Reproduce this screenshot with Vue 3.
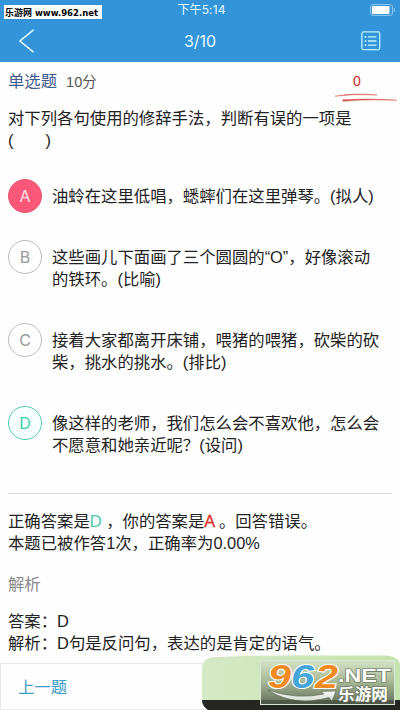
<script setup>
const options = [
  { key: 'A', state: 'wrong', lines: ['油蛉在这里低唱，蟋蟀们在这里弹琴。(拟人)'] },
  { key: 'B', state: '', lines: ['这些画儿下面画了三个圆圆的“O”，好像滚动', '的铁环。(比喻)'] },
  { key: 'C', state: '', lines: ['接着大家都离开床铺，喂猪的喂猪，砍柴的砍', '柴，挑水的挑水。(排比)'] },
  { key: 'D', state: 'right', lines: ['像这样的老师，我们怎么会不喜欢他，怎么会', '不愿意和她亲近呢？(设问)'] },
]
</script>

<template>
  <div class="screen">
    <header class="header">
      <div class="status">
        <span class="time">下午5:14</span>
        <svg class="battery" width="26" height="12" viewBox="0 0 26 12">
          <rect x=".6" y=".6" width="21.8" height="10.8" rx="2.2" fill="none" stroke="#94c9ef" />
          <rect x="2" y="2" width="17.5" height="8" rx="1" fill="#fff" />
          <path d="M24 4v4q1.5-2 0-4z" fill="#94c9ef" stroke="#94c9ef" stroke-width=".6" />
        </svg>
      </div>
      <nav class="nav">
        <svg class="back" width="16" height="24" viewBox="0 0 16 24">
          <path d="M14.5 .8L1 12l13.500 11.200" fill="none" stroke="#e4fcff" stroke-width="1.5" />
        </svg>
        <span class="title">3/10</span>
        <svg class="list" width="20" height="20" viewBox="0 0 20 20">
          <rect x=".9" y=".9" width="17.800" height="17.800" rx="1.500" fill="none" stroke="#b9f2fb" stroke-width="1.300" />
          <path d="M7 5.800h8.500M7 10h8.500M7 14.200h8.500" stroke="#c9f6fc" stroke-width="1.300" />
          <path d="M3.700 5.800h1.700M3.700 10h1.700M3.700 14.200h1.700" stroke="#c9f6fc" stroke-width="1.700" />
        </svg>
      </nav>
      <div class="stamp">
        <svg width="98" height="14" viewBox="0 0 98 14">
          <text x="1" y="11" font-size="9" textLength="27" lengthAdjust="spacingAndGlyphs">乐游网</text>
          <text class="url" x="31" y="11" font-size="9" textLength="63" lengthAdjust="spacingAndGlyphs">www.962.net</text>
        </svg>
      </div>
    </header>

    <main class="body">
      <div class="meta">
        <span class="kind">单选题</span>
        <span class="points">10分</span>
        <div class="score">
          <span>0</span>
          <svg width="64" height="12" viewBox="0 0 64 12">
            <path d="M1 5.200Q20 1.500 43 4Q20 2.800 1 5.200z" fill="#d84a43" stroke="#d84a43" stroke-width=".4" />
            <path d="M8.500 8.700Q35 7 63 9.200Q35 8.200 9 10.200z" fill="#d84a43" stroke="#d84a43" stroke-width=".4" />
          </svg>
        </div>
      </div>
      <p class="question">对下列各句使用的修辞手法，判断有误的一项是<br />(<span class="blank"></span>)</p>

      <ul class="options">
        <li v-for="o in options" :key="o.key" class="option">
          <span class="badge" :class="o.state">{{ o.key }}</span>
          <div class="answer">
            <div v-for="line in o.lines" :key="line">{{ line }}</div>
          </div>
        </li>
      </ul>

      <section class="result">
        <div>正确答案是<span class="green">D</span> ，你的答案是<span class="red">A</span> 。回答错误。</div>
        <div>本题已被作答1次，正确率为0.00%</div>
      </section>
      <h2 class="heading">解析</h2>
      <section class="explain">
        <div>答案：D</div>
        <div>解析：D句是反问句，表达的是肯定的语气。</div>
      </section>
    </main>

    <footer class="footer">
      <span>上一题</span>
    </footer>

    <svg class="mark" width="200" height="56" viewBox="0 0 200 56">
      <defs>
        <linearGradient id="leaf" x1="0" y1="0" x2="1" y2="0">
          <stop offset="0" stop-color="#d5e9c5" />
          <stop offset="1" stop-color="#c5e4ad" />
        </linearGradient>
        <linearGradient id="panel" x1="0" y1="0" x2="0" y2="1">
          <stop offset="0" stop-color="#d3e3c5" />
          <stop offset=".5" stop-color="#a5b694" />
          <stop offset="1" stop-color="#626d58" />
        </linearGradient>
        <linearGradient id="swoosh" x1="0" y1="0" x2="0" y2="1">
          <stop offset="0" stop-color="#fff" />
          <stop offset="1" stop-color="#d6ddd0" />
        </linearGradient>
      </defs>
      <path d="M2 46V16Q2 3 16 3Q80 .5 130 1.500H184Q200 2 200 12V46z" fill="url(#leaf)" />
      <path d="M2 46H200V56H8Q2 52 2 46z" fill="#252622" />
      <rect x="60.500" y="6.500" width="134" height="44" fill="url(#panel)" stroke="#dce6d4" />
      <path d="M61 46H194V50H61z" fill="#42483d" opacity=".65" />
      <g class="digits" font-size="33" stroke="#fff" stroke-width="2" paint-order="stroke">
        <text x="68" y="33.500" fill="#f08b23" textLength="23" lengthAdjust="spacingAndGlyphs">9</text>
        <text x="91" y="33.500" fill="#45a5d9" textLength="23" lengthAdjust="spacingAndGlyphs">6</text>
        <text x="115" y="33.500" fill="#f08b23" textLength="23" lengthAdjust="spacingAndGlyphs">2</text>
      </g>
      <g fill="#fff" stroke="#66715c" stroke-width="1.200" paint-order="stroke">
        <text class="net" x="138" y="28" font-size="18" textLength="53" lengthAdjust="spacingAndGlyphs">.NET</text>
        <text class="cn" x="138" y="46" font-size="16" textLength="50" lengthAdjust="spacingAndGlyphs">乐游网</text>
      </g>
      <path d="M68 36Q96 46 124 40L121 37.500L136 37L132 47L129 43.500Q94 53 68 36z" fill="url(#swoosh)" stroke="#5c6653" stroke-width=".6" />
    </svg>
  </div>
</template>

<style>
body { margin: 0; background: #fefefe; }
</style>

<style scoped>
.screen {
  position: relative;
  width: 400px;
  height: 710px;
  overflow: hidden;
  display: flex;
  flex-direction: column;
  background: #fefefe;
  color: #222;
  font-family: "Liberation Sans", "Noto Sans CJK SC", sans-serif;
  font-size: 16.37px;
  line-height: 22px;
  white-space: nowrap;
}
.header { height: 62px; background: #3494d9; flex: none; position: relative; }
.status { display: grid; grid-template-columns: 1fr auto 1fr; height: 20px; align-items: center; }
.time { grid-column: 2; font: 12px/20px Inter, "Noto Sans CJK SC", sans-serif; color: #e1faff; padding-left: 3px; letter-spacing: .1px; }
.battery { justify-self: end; margin-right: 4px; }
.nav { display: grid; grid-template-columns: 1fr auto 1fr; height: 42px; align-items: center; }
.back { margin-left: 19px; }
.title { font: 16px/24px Inter, sans-serif; color: #e1faff; }
.list { justify-self: end; margin-right: 19px; margin-top: -1px; }
.stamp { position: absolute; left: 4px; top: 5px; width: 98px; height: 14px; background: #fff; }
.stamp svg { display: block; }
.stamp text { font-family: "Noto Sans CJK SC", sans-serif; font-weight: 700; fill: #000; }
.stamp .url { font-family: "DejaVu Sans", sans-serif; }
.body { padding: 0 8px; flex: 1; min-height: 0; }
.meta { display: flex; align-items: center; height: 45px; }
.kind { color: #3f5c90; margin-top: -7px; }
.points { color: #555; font-size: 14.5px; margin: -5px 0 0 9px; }
.score { margin-left: auto; width: 64px; margin-right: -6px; display: flex; flex-direction: column; color: #d3251d; font-size: 14px; }
.score span { padding-left: 19px; line-height: 20px; margin-top: 4px; }
.score svg { display: block; }
.question { margin: 0; height: 44px; }
.blank { display: inline-block; width: 32px; }
.options { list-style: none; margin: 28px 0 0; padding: 0; display: flex; flex-direction: column; }
.option { display: flex; align-items: flex-start; gap: 10px; height: 83px; }
.option:first-child { height: 61px; }
.badge {
  box-sizing: border-box;
  width: 34px;
  height: 34px;
  border: 1px solid #bbb;
  border-radius: 50%;
  color: #999;
  text-align: center;
  font: 16px/33px Inter, sans-serif;
  flex: none;
}
.badge.wrong { background: #fa5878; border-color: #e85a75; color: #ffe0e8; }
.badge.right { border-color: #59c9ae; color: #3fcfad; background: #f6fffd; }
.answer { padding-top: 6px; }
.result { border-top: 1px solid #ddd; margin-top: 4px; padding-top: 16px; }
.green { color: #4cc9ad; }
.red { color: #dc2e27; -webkit-text-stroke: .3px #dc2e27; }
.heading { font: inherit; color: #888; margin: 19px 0 15px; }
.footer {
  box-sizing: border-box;
  height: 47px;
  flex: none;
  border: 1px solid #e8e8e8;
  display: flex;
  align-items: center;
  padding-left: 17px;
  color: #409dc6;
  background: #fefefe;
}
.mark { position: absolute; left: 200px; top: 654px; }
.digits { font-family: "Liberation Sans", sans-serif; font-weight: 700; font-style: italic; }
.net { font-family: "Liberation Sans", sans-serif; font-weight: 700; }
.cn { font-family: "Noto Sans CJK SC", sans-serif; font-weight: 700; }
</style>
